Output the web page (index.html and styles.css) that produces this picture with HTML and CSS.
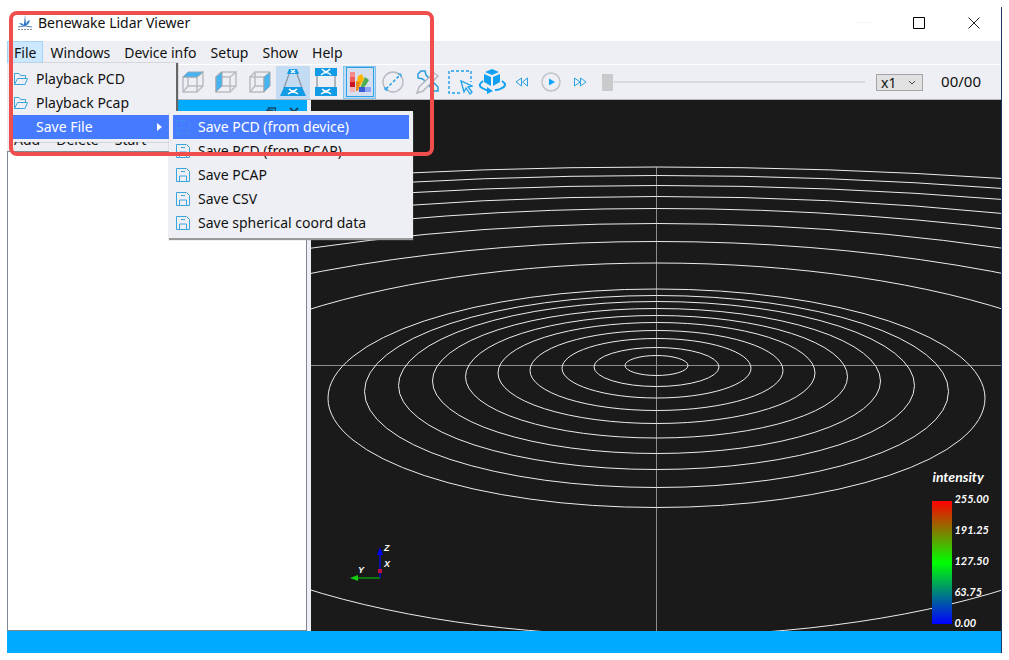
FILE: index.html
```html
<!DOCTYPE html>
<html lang="en">
<head>
<meta charset="utf-8">
<title>Benewake Lidar Viewer</title>
<link rel="stylesheet" href="styles.css">
</head>
<body>
<svg class="defs" aria-hidden="true">
  <symbol id="folder" viewBox="0 0 14 14"><path d="M.5 12.500v-11h4.500l1.500 2h5v3M.5 12.500l3-6H13.500l-2.500 6z" fill="none" stroke="#3aa5dc"/></symbol>
  <symbol id="disk" viewBox="0 0 14 14"><path d="M.5.5h10l3 3v10H.5zM3.500 13.500V8h7v5.500M5 3.500h4" fill="none" stroke="#3aa5dc"/></symbol>
</svg>
<div class="window">
  <header class="titlebar">
    <svg class="logo" viewBox="0 0 16 16"><path d="M8 0 7 10h2z" fill="#1c5fb5"/><path d="M9 10q0-4 4-5-1 5-5 6Q4 11 2 8q4 0 5 2" fill="#2f7fd0"/><path d="M1 12q7-2 14 0" fill="none" stroke="#5c83b5"/><path d="M1 14.500h14" stroke="#8a8f98" stroke-dasharray="2 1"/></svg>
    <h1 class="title">Benewake Lidar Viewer</h1>
    <button class="winbtn" aria-label="Minimize"><svg width="14" height="14"><path d="M0 6.500h14" stroke="#f3f3f3"/></svg></button>
    <button class="winbtn" aria-label="Maximize"><svg width="14" height="14"><path d="M1.500 1.500h11v11h-11z" fill="none" stroke="#000"/></svg></button>
    <button class="winbtn" aria-label="Close"><svg width="14" height="14"><path d="M1.500 1.500l11 11m0-11l-11 11" stroke="#222"/></svg></button>
  </header>

  <nav class="menubar">
    <button class="menubtn open">File</button>
    <button class="menubtn">Windows</button>
    <button class="menubtn">Device info</button>
    <button class="menubtn">Setup</button>
    <button class="menubtn">Show</button>
    <button class="menubtn">Help</button>
    <ul class="menu file-menu">
      <li><button class="item"><svg class="ico"><use href="#folder"/></svg>Playback PCD</button></li>
      <li><button class="item"><svg class="ico"><use href="#folder"/></svg>Playback Pcap</button></li>
      <li class="parent">
        <button class="item active"><span class="ico"></span>Save File<svg class="arrow" viewBox="0 0 5 8"><path d="M0 0l5 4-5 4z" fill="#fff"/></svg></button>
        <ul class="menu submenu">
          <li><button class="item active"><svg class="ico"><use href="#disk"/></svg>Save PCD (from device)</button></li>
          <li><button class="item"><svg class="ico"><use href="#disk"/></svg>Save PCD (from PCAP)</button></li>
          <li><button class="item"><svg class="ico"><use href="#disk"/></svg>Save PCAP</button></li>
          <li><button class="item"><svg class="ico"><use href="#disk"/></svg>Save CSV</button></li>
          <li><button class="item"><svg class="ico"><use href="#disk"/></svg>Save spherical coord data</button></li>
        </ul>
      </li>
    </ul>
  </nav>

  <div class="toolbar">
    <div class="tools">
      <button class="tool" aria-label="Top view"><svg viewBox="0 0 26 26"><path d="M3 8h14v15H3zM17 8l6-5v14l-6 6M8 3v14h15M8 17l-5 6" fill="none" stroke="#b9bcc0" stroke-width="1.500"/><path d="M3 8l5-5h15l-6 5z" fill="#45b4f5" stroke="#9aa7b0"/></svg></button>
      <button class="tool" aria-label="Left view"><svg viewBox="0 0 26 26"><path d="M3 8h14v15H3zM17 8l6-5v14l-6 6M8 3h15M8 17h15M3 8l5-5" fill="none" stroke="#b9bcc0" stroke-width="1.500"/><path d="M3 8l6-5v14l-6 6z" fill="#45b4f5" stroke="#9aa7b0"/></svg></button>
      <button class="tool" aria-label="Right view"><svg viewBox="0 0 26 26"><path d="M3 8h14v15H3zM3 8l5-5h15M8 3v14h9M8 17l-5 6" fill="none" stroke="#b9bcc0" stroke-width="1.500"/><path d="M17 8l6-5v14l-6 6z" fill="#45b4f5" stroke="#9aa7b0"/></svg></button>
      <button class="tool on" aria-label="Perspective"><svg viewBox="0 0 26 28"><path d="M9 6L4 20M17 6l5 14" stroke="#8e979f" stroke-width="1.300"/><path d="M9 1h8l2 5H7zM4 19h18l4 9H0z" fill="#149be6"/><path d="M11 2l4 3m0-3l-4 3M9 21q4 4 8 0M8 26q5-4 10 0" fill="none" stroke="#fff" stroke-width="1.500"/></svg></button>
      <button class="tool" aria-label="Parallel"><svg viewBox="0 0 26 28"><path d="M4 8v12M22 8v12" stroke="#8e979f" stroke-width="1.300"/><path d="M2 0h22v8H2zM2 19h22v9H2z" fill="#149be6"/><path d="M9 1q4 5 8 0M8 7q5-5 10 0M9 21q4 4 8 0M8 26q5-4 10 0" fill="none" stroke="#fff" stroke-width="1.500"/></svg></button>
      <button class="tool on framed" aria-label="Colour"><svg viewBox="0 0 26 26"><path d="M3 3h5v5H3z" fill="#f48a8a"/><path d="M3 8h5v5H3z" fill="#f05a5a"/><path d="M3 13h5v5H3z" fill="#c8141e"/><path d="M3 18h5v5H3z" fill="#f7b3b8"/><path d="M11 7l4-2 2 5-6 11-1-8z" fill="#ffb400"/><path d="M9 12l4 1-2 9H9z" fill="#e88b1e"/><path d="M18 8l4 3-3 5-6 6 1-5z" fill="#4fae50"/><path d="M18 18h6v5h-6z" fill="#8ea4f8"/><path d="M12 18h6v5h-6z" fill="#3c5bd8"/></svg></button>
      <button class="tool" aria-label="Measure"><svg viewBox="0 0 26 26"><circle cx="13" cy="13" r="10" fill="none" stroke="#b5b9c2" stroke-width="1.400"/><path d="M6 20L20 6" stroke="#1ba0ea" stroke-width="1.500" stroke-dasharray="3 2"/><path d="M5 18v3h3M18 5h3v3" fill="none" stroke="#1ba0ea"/></svg></button>
      <button class="tool" aria-label="Edit tools"><svg viewBox="0 0 26 26"><path d="M9 10L4 9V5l3-3h4l1 4 12 12v4h-4L9 10" fill="none" stroke="#2b9ddd" stroke-width="1.500"/><path d="M20 4l4 3L9 22l-6 2 2-6z" fill="#edeff4" stroke="#b5b8bd" stroke-width="1.500"/></svg></button>
      <button class="tool" aria-label="Select area"><svg viewBox="0 0 26 26"><path d="M13 24H2V2h22v11" fill="none" stroke="#1ba0ea" stroke-width="1.400" stroke-dasharray="3 2"/><path d="M14 12l3 11 2-4 4 6 2-2-4-5 4-1z" fill="#edeff4" stroke="#1ba0ea" stroke-width="1.300"/></svg></button>
      <button class="tool" aria-label="Rotate"><svg class="wide" viewBox="0 0 30 26"><path d="M14 0l7 3-7 3-7-3zM6 5l7 3v9l-7-4zM22 5l-7 3v9l7-4z" fill="#10a0f4"/><path d="M5 12Q-1 16 4 19t9 3M24 12q6 4 0 7-3 2-7 2" fill="none" stroke="#10a0f4" stroke-width="2"/><path d="M9 18l6 4-6 3z" fill="#10a0f4"/></svg></button>
    </div>
    <div class="player">
      <button class="play" aria-label="Slower"><svg width="14" height="10"><path d="M6.500 1v8L1 5zM12.500 1v8L7.500 5z" fill="none" stroke="#2ba2e3"/></svg></button>
      <button class="play" aria-label="Play"><svg width="22" height="22"><circle cx="11" cy="11" r="9" fill="none" stroke="#bfc2c8" stroke-width="1.500"/><path d="M9 7.500l6 3.500-6 3.500z" fill="#0ea3f5"/></svg></button>
      <button class="play" aria-label="Faster"><svg width="14" height="10"><path d="M1.500 1v8L7 5zM7.500 1v8L13 5z" fill="none" stroke="#2ba2e3"/></svg></button>
    </div>
    <input class="seek" type="range" min="0" max="100" value="0" aria-label="Frame">
    <div class="speed">
      <select class="speed-select" aria-label="Speed"><option>x1</option></select>
      <svg class="chevron" width="8" height="6"><path d="M1 1l3 3 3-3" fill="none" stroke="#444"/></svg>
    </div>
    <span class="frames">00/00</span>
  </div>

  <main class="content">
    <aside class="dock">
      <div class="dock-head">
        <button class="dock-btn" aria-label="Float"><svg width="10" height="10"><path d="M2.500 3V1h7v6H7M.5 3.500h6v5h-6z" fill="none" stroke="#174560" stroke-width="1.500"/></svg></button>
        <button class="dock-btn" aria-label="Close panel"><svg width="10" height="10"><path d="M1 1l8 8m0-8L1 9" stroke="#174560" stroke-width="2"/></svg></button>
      </div>
      <div class="dock-actions">
        <button class="action">Add</button><button class="action">Delete</button><button class="action">Start</button>
      </div>
      <div class="list"></div>
    </aside>
    <section class="scene">
      <svg class="view" viewBox="-345 -265 690 531" preserveAspectRatio="xMidYMid slice">
        <path d="M-345 0h690v1h-690zM0-198h1v464H0z" fill="#8c8c8c"/>
        <g transform="translate(.5 .5)" fill="none" stroke="#ececec">
          <ellipse cy="0" rx="31.500" ry="10"/>
          <ellipse cy="1.500" rx="62.500" ry="19.500"/>
          <ellipse cy="2.750" rx="94.500" ry="29.750"/>
          <ellipse cy="5" rx="126.500" ry="40"/>
          <ellipse cy="7.500" rx="158.500" ry="50.500"/>
          <ellipse cy="11.250" rx="191" ry="61.250"/>
          <ellipse cy="15.500" rx="224" ry="72.500"/>
          <ellipse cy="20" rx="258" ry="84"/>
          <ellipse cy="26" rx="292" ry="96"/>
          <ellipse cy="32.750" rx="328.500" ry="109.250"/>
          <ellipse cy="84" rx="526" ry="186.500"/>
          <ellipse cy="186" rx="783" ry="310"/>
          <ellipse cy="423" rx="1182" ry="565"/>
          <ellipse cy="1386" rx="2139" ry="1543"/>
          <path d="M-346-152Q0-186 346-152M-346-166Q0-194 346-166M-346-177Q0-203 346-177M-346-187Q0-210 346-187"/>
        </g>
        <path d="M-276 186v27" stroke="#0a0ad8" stroke-width="1.500"/><path d="M-279 190l3-8 3 8z" fill="#0000f0"/>
        <path d="M-276 213h-25" stroke="#0a960a" stroke-width="1.500"/><path d="M-298 210l-8 3 8 3z" fill="#10d010"/>
        <path d="M-278 204h4v4h-4z" fill="#c01040"/>
        <g class="axis-text"><text x="-272" y="186">Z</text><text x="-272" y="202">X</text><text x="-298" y="208">Y</text></g>
      </svg>
      <div class="legend">
        <div class="legend-title">intensity</div>
        <div class="legend-body">
          <div class="ramp"></div>
          <div class="ticks"><span>255.00</span><span>191.25</span><span>127.50</span><span>63.75</span><span>0.00</span></div>
        </div>
      </div>
    </section>
  </main>
  <footer class="status"></footer>
  <div class="callout"></div>
</div>
</body>
</html>
```

FILE: styles.css
```css
* { box-sizing: border-box; }

body {
  margin: 0;
  background: #fff;
  color: #111;
  font: 15px/20px "Noto Sans", "Open Sans", sans-serif;
}

button {
  margin: 0;
  padding: 0;
  border: 0;
  background: none;
  color: inherit;
  font: inherit;
}

ul { list-style: none; margin: 0; padding: 0; }
svg { display: block; flex: none; }
.defs { position: absolute; width: 0; height: 0; }

.window {
  position: relative;
  display: flex;
  flex-direction: column;
  min-height: calc(100vh - 14px);
  margin: 7px;
  border-right: 1px solid #1c355c;
}

/* Title bar */
.titlebar { display: flex; align-items: center; height: 34px; padding: 0 0 2px 10px; background: #fff; }
.logo { width: 16px; height: 16px; }
.title { flex: 1; margin: 0 0 0 5px; font-size: 14px; font-weight: 400; }
.winbtn { display: flex; align-items: center; justify-content: center; width: 55px; height: 32px; }

/* Menus */
.menubar {
  position: relative;
  z-index: 2;
  display: flex;
  height: 24px;
  background: #edeff4;
  border-bottom: 1px solid #fff;
}
.menubtn { height: 23px; padding: 0 7px; font-size: 14px; white-space: nowrap; }
.menubtn.open { background: #cce8ff; box-shadow: inset 0 0 0 1px #a6d4f7; }
.menu {
  position: absolute;
  padding: 4px 4px 3px;
  background: #edeff4;
}
.file-menu { top: 22px; left: 0; width: 169px; box-shadow: 2px 0 1px #666; }
.submenu { top: -4px; left: 158px; width: 244px; box-shadow: 0 2px 1px #999; }
.parent { position: relative; }
.item {
  display: flex;
  align-items: center;
  gap: 8px;
  width: 100%;
  height: 24px;
  padding: 0 10px 0 3px;
  font-size: 14px;
  white-space: nowrap;
}
.item.active { background: #477bff; color: #fff; }
.item.active use { opacity: .4; }
.ico { width: 14px; height: 14px; }
.arrow { width: 5px; height: 8px; margin-left: auto; }

/* Toolbar */
.toolbar {
  display: flex;
  align-items: center;
  height: 35px;
  padding: 0 20px 0 169px;
  background: #edeff4;
  border-bottom: 1px solid #b5b8bd;
}
.tools { display: flex; width: 334px; }
.tool { display: flex; flex: 1; align-items: center; justify-content: center; height: 33px; }
.tool svg { width: 26px; height: 28px; }
.tool svg.wide { width: 30px; }
.tool.on { background: #c3dcf3; }
.tool.framed { box-shadow: inset 0 0 0 1px #7fc3ee; }
.tool.framed svg { background: #d5dff0; box-shadow: 0 0 0 1px #2ba2e3; }
.player { display: flex; gap: 5px; }
.play { display: flex; align-items: center; justify-content: center; width: 24px; height: 24px; }
.seek {
  flex: 1;
  min-width: 0;
  height: 17px;
  margin: 0 11px 0 10px;
  appearance: none;
  background: linear-gradient(#d9dadd, #d9dadd) center / 100% 2px no-repeat;
}
.seek::-webkit-slider-thumb { appearance: none; width: 11px; height: 17px; background: #c9cacb; }
.speed { position: relative; width: 47px; }
.speed-select {
  display: block;
  width: 100%;
  height: 17px;
  padding: 0 4px;
  appearance: none;
  border: 1px solid #a5a5a5;
  border-radius: 0;
  background: #e1e1e1;
  color: #111;
  font: 14px/15px "Noto Sans", sans-serif;
}
.chevron { position: absolute; top: 6px; right: 7px; pointer-events: none; }
.frames { margin: 0 0 2px 18px; }

/* Body */
.content { display: flex; flex: 1; background: #edeff4; }
.dock { display: flex; flex-direction: column; width: 300px; margin-right: 4px; }
.dock-head {
  display: flex;
  align-items: center;
  justify-content: flex-end;
  gap: 13px;
  height: 24px;
  padding-right: 8px;
  background: #0af;
}
.dock-actions { display: flex; align-items: flex-end; gap: 16px; height: 27px; padding: 0 7px 1px; }
.action { font-size: 14px; }
.list { flex: 1; background: #fff; border: 1px solid #7f8790; }

.scene { position: relative; flex: 1; min-width: 0; overflow: hidden; background: #1a1a1a; }
.view { position: absolute; inset: 0; width: 100%; height: 100%; }
.axis-text { fill: #fff; font: italic 700 9px "Liberation Sans", sans-serif; }

.legend {
  position: absolute;
  right: 12px;
  bottom: 2px;
  color: #fff;
  font: italic 700 11px/12px Lato, sans-serif;
}
.legend-title { margin-bottom: 7px; font-size: 14px; line-height: 18px; }
.legend-body { display: flex; gap: 2px; }
.ramp { width: 20px; height: 123px; margin-top: 8px; background: linear-gradient(#f00, #0f0 50%, #00f); }
.ticks { display: flex; flex-direction: column; justify-content: space-between; height: 136px; }

.status { height: 22px; background: #0af; }

/* Highlight frame over the File menu path */
.callout {
  position: absolute;
  z-index: 3;
  top: 4px;
  left: 2px;
  width: 425px;
  height: 145px;
  border: 4px solid #f04e4c;
  border-radius: 8px;
  pointer-events: none;
}
```
